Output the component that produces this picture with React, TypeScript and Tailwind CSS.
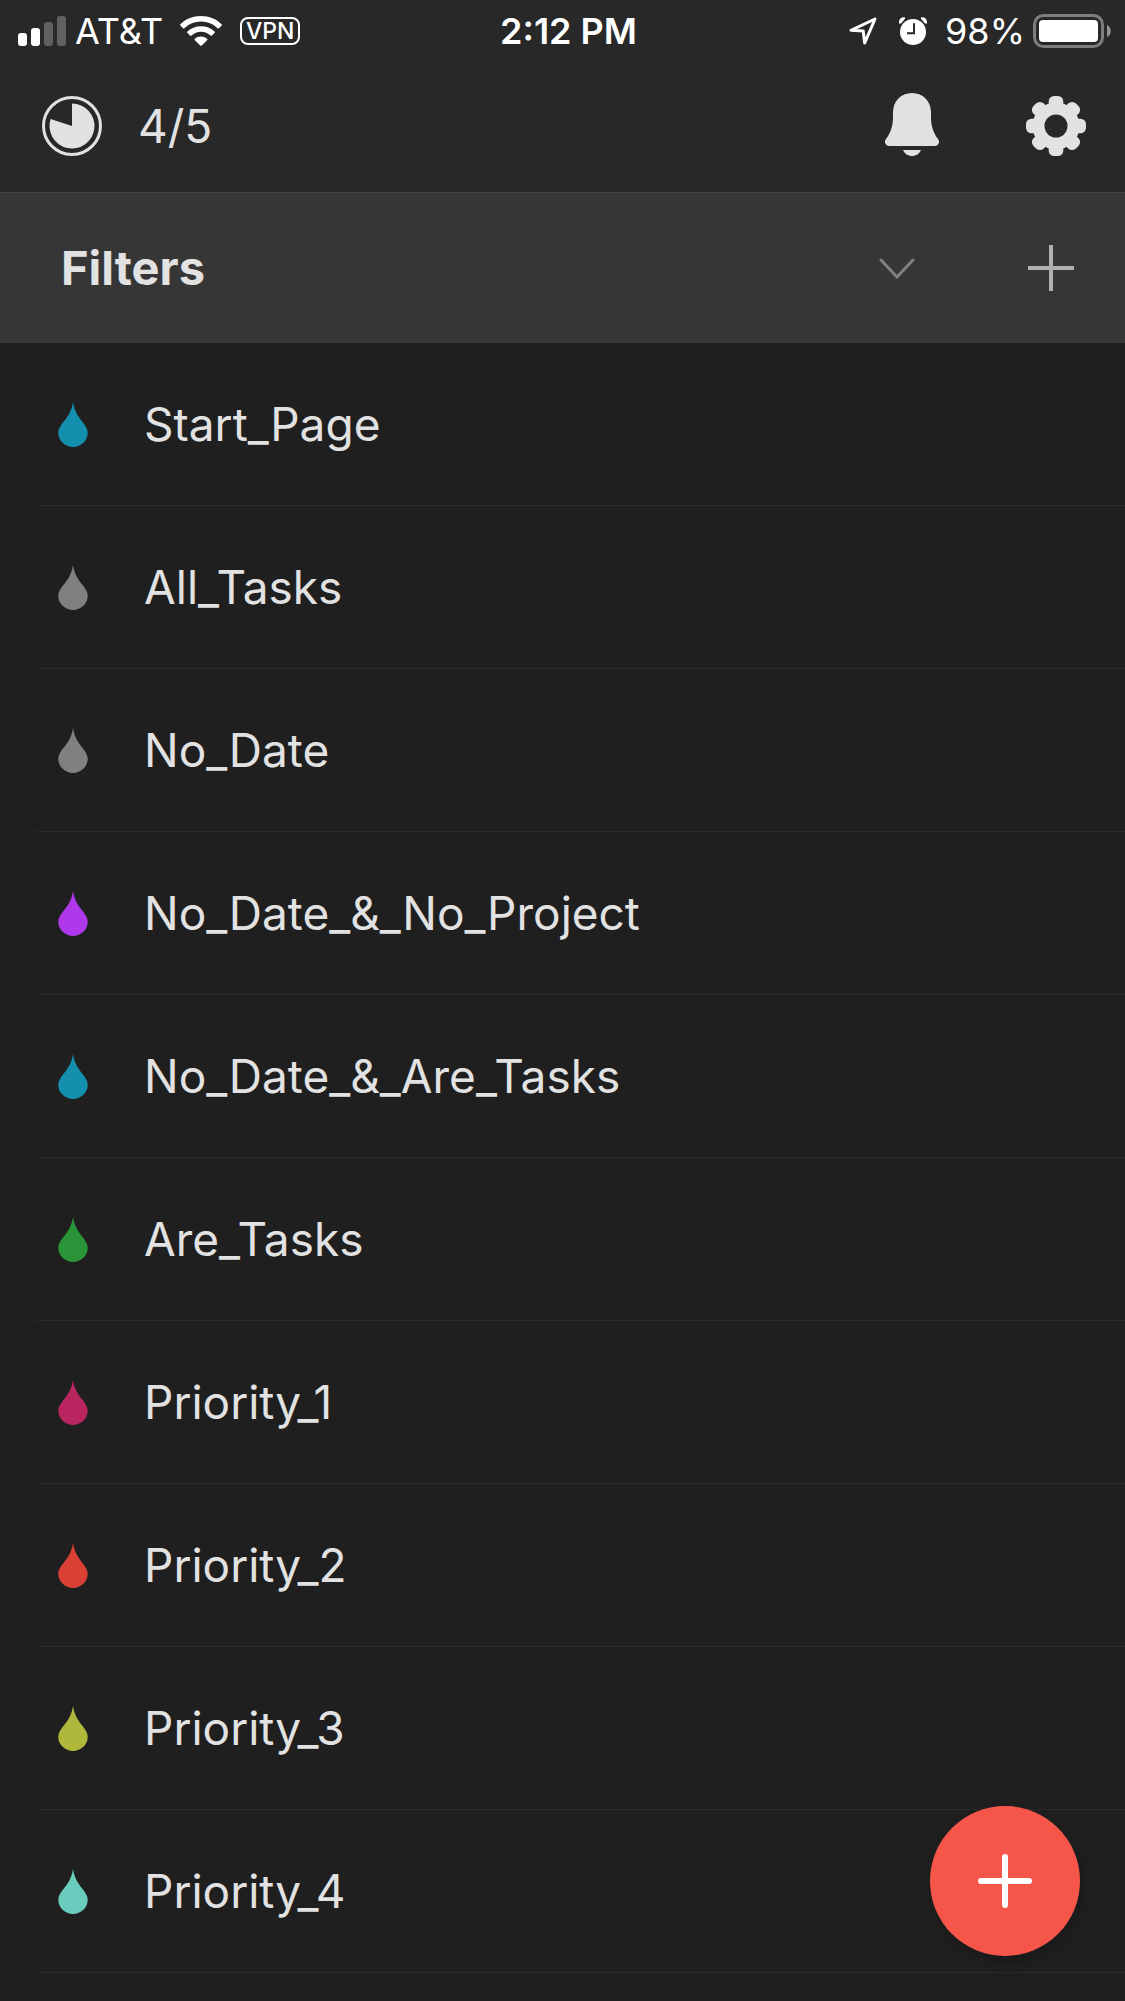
import type { ReactNode } from "react";

const filters = [
  { name: "Start_Page", color: "text-[#158fae]" },
  { name: "All_Tasks", color: "text-[#808080]" },
  { name: "No_Date", color: "text-[#808080]" },
  { name: "No_Date_&_No_Project", color: "text-[#af38eb]" },
  { name: "No_Date_&_Are_Tasks", color: "text-[#158fae]" },
  { name: "Are_Tasks", color: "text-[#299438]" },
  { name: "Priority_1", color: "text-[#b8255f]" },
  { name: "Priority_2", color: "text-[#db4035]" },
  { name: "Priority_3", color: "text-[#afb83b]" },
  { name: "Priority_4", color: "text-[#6accbc]" },
];

function StatusBar() {
  return (
    <div className="grid h-[60px] grid-cols-[1fr_auto_1fr] items-center pt-0.5 pr-[14px] pl-[18px] text-[36px] leading-[44px] text-white">
      <div className="flex items-center">
        <svg className="h-[30px] w-12" viewBox="0 0 48 30" fill="currentColor" aria-hidden="true">
          <rect x="0" y="17" width="9" height="13" rx="3" />
          <rect x="13" y="12" width="9" height="18" rx="3" />
          <rect x="26" y="6" width="9" height="24" rx="3" fill="#606060" />
          <rect x="39" y="0" width="9" height="30" rx="3" fill="#606060" />
        </svg>
        <span className="ml-[9px]">AT&amp;T</span>
        <svg className="ml-[17px] h-[30px] w-[42px]" viewBox="0 0 42 30" fill="currentColor" aria-hidden="true">
          <path d="M21 0C12.900 0 5.500 3.100 0.400 8.200a1 1 0 0 0 0 1.400l2.600 2.600a1 1 0 0 0 1.400 0A24 24 0 0 1 21 5.600a24 24 0 0 1 16.600 6.600a1 1 0 0 0 1.400 0l2.600-2.600a1 1 0 0 0 0-1.400C36.500 3.100 29.100 0 21 0Z" />
          <path d="M21 10.200c-5.300 0-10.100 2-13.600 5.400a1 1 0 0 0 0 1.400l2.700 2.600a1 1 0 0 0 1.400 0A13.600 13.600 0 0 1 21 15.700c3.700 0 7 1.500 9.500 3.900a1 1 0 0 0 1.400 0l2.700-2.600a1 1 0 0 0 0-1.400A19.500 19.500 0 0 0 21 10.200Z" />
          <path d="M21 20.500c-2.400 0-4.500.9-6.100 2.300a1 1 0 0 0 0 1.400l5.300 5.400a1.200 1.200 0 0 0 1.600 0l5.300-5.400a1 1 0 0 0 0-1.400A9.200 9.200 0 0 0 21 20.500Z" />
        </svg>
        <span className="ml-[18px] flex h-7 w-[60px] items-center justify-center rounded-lg border-2 border-white text-[23px] leading-none font-medium">
          VPN
        </span>
      </div>
      <span className="pl-2 font-semibold">2:12 PM</span>
      <div className="flex items-center justify-end">
        <svg className="h-7 w-7" viewBox="0 0 28 28" fill="none" stroke="currentColor" strokeWidth="3" strokeLinejoin="round" aria-hidden="true">
          <path d="M26 2L2 13.300L14.200 14L15.700 26Z" />
        </svg>
        <svg className="ml-[22px] h-7 w-7" viewBox="0 0 28 28" aria-hidden="true">
          <circle cx="14" cy="15" r="13" fill="currentColor" />
          <path d="M0 6.500C-.3 2.500 1.500 0 6 .4L6 1.800L2 6.500ZM28 6.500C28.300 2.500 26.500 0 22 .4L22 1.800L26 6.500Z" fill="currentColor" />
          <path d="M15 6.200V16.200H8" fill="none" stroke="#282828" strokeWidth="2" />
        </svg>
        <span className="ml-[18px]">98%</span>
        <svg className="ml-2 h-[34px] w-[78px]" viewBox="0 0 78 34" aria-hidden="true">
          <rect x="1.500" y="1.500" width="68" height="31" rx="9" fill="none" stroke="#7d7d7d" strokeWidth="3" />
          <rect x="6" y="6" width="59" height="22" rx="4" fill="#fff" />
          <path d="M74 11C79 13 79 21 74 23Z" fill="#939393" />
        </svg>
      </div>
    </div>
  );
}

function Toolbar() {
  return (
    <div className="flex h-[132px] items-center pr-[39px] pl-[42px]">
      <button type="button" className="flex items-center gap-9">
        <svg className="size-[60px]" viewBox="0 0 60 60" aria-hidden="true">
          <circle cx="30" cy="30" r="28.500" fill="none" stroke="currentColor" strokeWidth="3" />
          <path d="M30 30V7.500A22.500 22.500 0 1 1 8.600 23.050Z" fill="currentColor" />
        </svg>
        <span className="text-[46px] leading-[60px]">4/5</span>
      </button>
      <button type="button" aria-label="Notifications" className="ml-auto">
        <svg className="h-[66px] w-[54px]" viewBox="0 0 54 66" fill="currentColor" aria-hidden="true">
          <path d="M27 0C15.500 0 8 8.500 8 19.500V24C8 34 5 40.500 1 46C-1.500 49.500 .8 53 4.500 53H49.500C53.200 53 55.500 49.500 53 46C49 40.500 46 34 46 24V19.500C46 8.500 38.500 0 27 0Z" />
          <path d="M18 57H36C34.500 60.800 31 63 27 63S19.500 60.800 18 57Z" />
        </svg>
      </button>
      <button type="button" aria-label="Settings" className="ml-[87px]">
        <svg className="size-[60px]" viewBox="-30 -30 60 60" aria-hidden="true">
          <g fill="currentColor">
            <circle r="23.500" />
            <rect x="-7.300" y="-30" width="14.600" height="60" rx="5.500" />
            <rect x="-7.300" y="-30" width="14.600" height="60" rx="5.500" transform="rotate(45)" />
            <rect x="-7.300" y="-30" width="14.600" height="60" rx="5.500" transform="rotate(90)" />
            <rect x="-7.300" y="-30" width="14.600" height="60" rx="5.500" transform="rotate(135)" />
          </g>
          <circle r="11.500" fill="#282828" />
        </svg>
      </button>
    </div>
  );
}

function SectionHeader({ children }: { children: ReactNode }) {
  return (
    <div className="flex h-[151px] items-center border-t border-[#444] bg-[#363636] pr-[51px] pl-[61px]">
      <h1 className="text-[47px] leading-[60px] font-bold">{children}</h1>
      <button type="button" aria-label="Collapse filters" className="ml-auto text-[#808080]">
        <svg className="h-[21px] w-9" viewBox="0 0 36 21" fill="none" stroke="currentColor" strokeWidth="3" aria-hidden="true">
          <path d="M2 2L18 19L34 2" strokeLinecap="round" />
        </svg>
      </button>
      <button type="button" aria-label="Add filter" className="ml-[113px] text-[#b0b0b0]">
        <svg className="size-[46px]" viewBox="0 0 46 46" stroke="currentColor" strokeWidth="4" aria-hidden="true">
          <path d="M23 0V46M0 23H46" />
        </svg>
      </button>
    </div>
  );
}

function FilterRow({ name, color }: { name: string; color: string }) {
  return (
    <li className="ml-9 border-b border-[#2a2a2a]">
      <a href="#" className="flex h-[162px] items-center gap-14 pl-[22px]">
        <svg className={`h-[45px] w-[30px] ${color}`} viewBox="0 0 30 45" fill="currentColor" aria-hidden="true">
          <path d="M15 0C16 6 17.500 10 20.500 14.500C25 21.300 29.700 25 29.700 30.800A14.700 14.200 0 0 1 .3 30.800C.3 25 5 21.300 9.500 14.500C12.500 10 14 6 15 0Z" />
        </svg>
        <span className="text-[46px] leading-[60px]">{name}</span>
      </a>
    </li>
  );
}

export default function App() {
  return (
    <div className="min-h-screen bg-[#1f1f1f] font-['Inter',sans-serif] text-[#e2e2e2]">
      <header className="bg-[#282828]">
        <StatusBar />
        <Toolbar />
      </header>
      <main>
        <SectionHeader>Filters</SectionHeader>
        <ul>
          {filters.map((filter) => (
            <FilterRow key={filter.name} name={filter.name} color={filter.color} />
          ))}
        </ul>
      </main>
      <button
        type="button"
        aria-label="Add task"
        className="fixed right-[45px] bottom-[45px] flex size-[150px] items-center justify-center rounded-full bg-[#f65649] text-white shadow-[3px_6px_12px_rgba(0,0,0,0.2)]"
      >
        <svg className="size-[54px]" viewBox="0 0 54 54" stroke="currentColor" strokeWidth="6" strokeLinecap="round" aria-hidden="true">
          <path d="M27 3V51M3 27H51" />
        </svg>
      </button>
    </div>
  );
}
